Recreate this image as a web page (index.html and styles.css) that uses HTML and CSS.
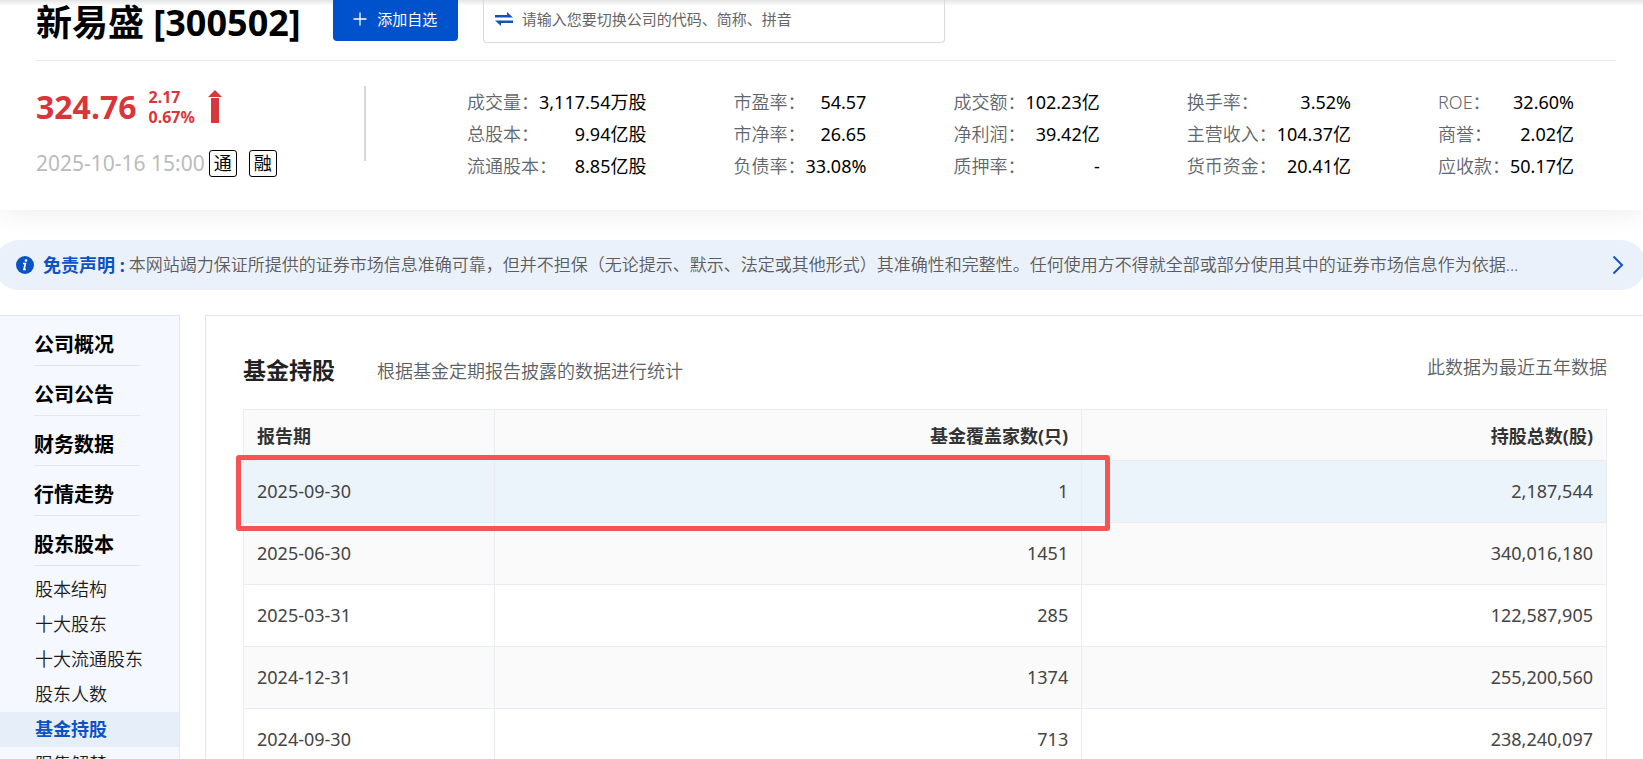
FILE: index.html
```html
<!DOCTYPE html>
<html lang="zh-CN">
<head>
    <meta charset="UTF-8">
    <meta name="viewport" content="width=device-width, initial-scale=1.0">
    <title>新易盛 [300502] 基金持股</title>
    <link rel="stylesheet" href="styles.css">
</head>
<body>

    <!-- Stock header -->
    <header class="stock-header">
        <div class="title-bar">
            <h1 class="stock-name">新易盛 [300502]</h1>
            <button class="add-btn" type="button">
                <svg width="14" height="14" viewBox="0 0 14 14" aria-hidden="true">
                    <path d="M7 0.5v13M0.5 7h13" stroke="#fff" stroke-width="1.3" fill="none"/>
                </svg>
                添加自选
            </button>
            <label class="search-box">
                <svg width="18" height="16" viewBox="0 0 18 16" aria-hidden="true">
                    <path d="M0 4H12V1L18 6.5H0zM18 9.5H0L6 15V12H18z" fill="#0f55b8"/>
                </svg>
                <input class="search-input" type="text" aria-label="切换公司" placeholder="请输入您要切换公司的代码、简称、拼音">
            </label>
        </div>

        <div class="quote">
            <div class="quote-price">
                <div class="price-row">
                    <span class="price">324.76</span>
                    <span class="change"><span>2.17</span><span>0.67%</span></span>
                    <svg class="arrow" width="14" height="34" viewBox="0 0 14 34" aria-hidden="true">
                        <path d="M7 0L14 7H0zM3 8H11V33H3z" fill="#d7363a"/>
                    </svg>
                </div>
                <div class="time-row">
                    <span class="time">2025-10-16 15:00</span>
                    <span class="tag">通</span>
                    <span class="tag">融</span>
                </div>
            </div>

            <div class="stats">
                <dl class="stat-group">
                    <div class="stat"><dt>成交量：</dt><dd>3,117.54万股</dd></div>
                    <div class="stat"><dt>总股本：</dt><dd>9.94亿股</dd></div>
                    <div class="stat"><dt>流通股本：</dt><dd>8.85亿股</dd></div>
                </dl>
                <dl class="stat-group">
                    <div class="stat"><dt>市盈率：</dt><dd>54.57</dd></div>
                    <div class="stat"><dt>市净率：</dt><dd>26.65</dd></div>
                    <div class="stat"><dt>负债率：</dt><dd>33.08%</dd></div>
                </dl>
                <dl class="stat-group">
                    <div class="stat"><dt>成交额：</dt><dd>102.23亿</dd></div>
                    <div class="stat"><dt>净利润：</dt><dd>39.42亿</dd></div>
                    <div class="stat"><dt>质押率：</dt><dd>-</dd></div>
                </dl>
                <dl class="stat-group">
                    <div class="stat"><dt>换手率：</dt><dd>3.52%</dd></div>
                    <div class="stat"><dt>主营收入：</dt><dd>104.37亿</dd></div>
                    <div class="stat"><dt>货币资金：</dt><dd>20.41亿</dd></div>
                </dl>
                <dl class="stat-group">
                    <div class="stat"><dt>ROE：</dt><dd>32.60%</dd></div>
                    <div class="stat"><dt>商誉：</dt><dd>2.02亿</dd></div>
                    <div class="stat"><dt>应收款：</dt><dd>50.17亿</dd></div>
                </dl>
            </div>
        </div>
    </header>

    <!-- Disclaimer -->
    <a class="notice" href="#">
        <svg width="20" height="20" viewBox="0 0 20 20" aria-hidden="true">
            <circle cx="10" cy="10" r="9" fill="#0b53c5"/>
            <circle cx="11" cy="5.5" r="1.3" fill="#fff"/>
            <path d="M8 8.5h2.4L9 14.3h1.8" stroke="#fff" stroke-width="1.7" fill="none"/>
        </svg>
        <strong class="notice-title">免责声明 :</strong>
        <span class="notice-text">本网站竭力保证所提供的证券市场信息准确可靠，但并不担保（无论提示、默示、法定或其他形式）其准确性和完整性。任何使用方不得就全部或部分使用其中的证券市场信息作为依据...</span>
        <svg class="notice-more" width="12" height="20" viewBox="0 0 12 20" aria-hidden="true">
            <path d="M1.5 1.5L10 10L1.5 18.5" stroke="#1457bd" stroke-width="2" fill="none"/>
        </svg>
    </a>

    <div class="layout">
        <!-- Side menu -->
        <nav class="side-menu">
            <a class="menu-title" href="#">公司概况</a>
            <a class="menu-title" href="#">公司公告</a>
            <a class="menu-title" href="#">财务数据</a>
            <a class="menu-title" href="#">行情走势</a>
            <a class="menu-title" href="#">股东股本</a>
            <div class="sub-menu">
                <a href="#">股本结构</a>
                <a href="#">十大股东</a>
                <a href="#">十大流通股东</a>
                <a href="#">股东人数</a>
                <a class="active" href="#">基金持股</a>
                <a href="#">限售解禁</a>
            </div>
        </nav>

        <!-- Fund holdings -->
        <main class="content">
            <div class="content-head">
                <h2>基金持股</h2>
                <p class="desc">根据基金定期报告披露的数据进行统计</p>
                <p class="range">此数据为最近五年数据</p>
            </div>
            <div class="table-wrap">
                <table class="data-table">
                    <thead>
                        <tr><th class="col-date">报告期</th><th class="col-count">基金覆盖家数(只)</th><th>持股总数(股)</th></tr>
                    </thead>
                    <tbody>
                        <tr class="current"><td>2025-09-30</td><td>1</td><td>2,187,544</td></tr>
                        <tr><td>2025-06-30</td><td>1451</td><td>340,016,180</td></tr>
                        <tr><td>2025-03-31</td><td>285</td><td>122,587,905</td></tr>
                        <tr><td>2024-12-31</td><td>1374</td><td>255,200,560</td></tr>
                        <tr><td>2024-09-30</td><td>713</td><td>238,240,097</td></tr>
                    </tbody>
                </table>
                <div class="mark"></div>
            </div>
        </main>
    </div>

</body>
</html>
```

FILE: styles.css
```css
* {
    box-sizing: border-box;
}

html {
    height: 100%;
    overflow: hidden;
}

body {
    margin: 0;
    font-family: "Noto Sans", "Noto Sans CJK SC", sans-serif;
    font-size: 18px;
    line-height: 32px;
    color: #000;
    background-color: #fff;
}

h1, h2, p, dl, dd {
    margin: 0;
}

a {
    color: inherit;
    text-decoration: none;
}

/* Stock header */
.stock-header {
    height: 210px;
    padding: 0 27px 0 36px;
    background: linear-gradient(#e4e4e4, #fff 6px);
    box-shadow: 0 4px 24px rgba(0, 0, 0, 0.07);
}

.title-bar {
    display: flex;
    align-items: flex-start;
    height: 61px;
    border-bottom: 1px solid #e9e9e9;
}

.stock-name {
    font-size: 36px;
    line-height: 45px;
    font-weight: bold;
    white-space: nowrap;
}

.add-btn {
    display: flex;
    align-items: center;
    justify-content: center;
    gap: 10px;
    width: 125px;
    height: 41px;
    margin-left: 32px;
    padding: 0 0 4px;
    border: 0;
    border-radius: 0 0 4px 4px;
    background-color: #0052cc;
    color: #fff;
    font-family: inherit;
    font-size: 15px;
}

.search-box {
    display: flex;
    align-items: center;
    gap: 9px;
    width: 462px;
    height: 43px;
    margin-left: 25px;
    padding: 0 11px 4px;
    border: 1px solid #d9dade;
    border-top: 0;
    border-radius: 0 0 4px 4px;
}

.search-input {
    flex: 1;
    padding: 0;
    border: 0;
    outline: 0;
    background: none;
    font-family: inherit;
    font-size: 15px;
}

.search-input::placeholder {
    color: #666;
    opacity: 1;
}

/* Price and key figures */
.quote {
    display: flex;
    padding-top: 25px;
}

.quote-price {
    width: 330px;
    height: 75px;
    border-right: 2px solid #d8d8d8;
}

.price-row {
    display: flex;
    align-items: center;
    height: 41px;
    color: #d7363a;
    font-weight: bold;
}

.price {
    font-size: 32px;
}

.change {
    display: flex;
    flex-direction: column;
    margin-left: 12px;
    font-size: 16px;
    line-height: 20px;
}

.arrow {
    margin-left: 13px;
}

.time-row {
    display: flex;
    align-items: center;
    margin-top: 20px;
}

.time {
    color: #bbb;
    font-size: 21px;
}

.tag {
    width: 28px;
    margin: 0 8px 0 4px;
    border: 1px solid #000;
    border-radius: 3px;
    line-height: 25px;
    text-align: center;
}

.stats {
    display: flex;
    gap: 87px;
    margin-left: 101px;
    white-space: nowrap;
}

.stat {
    display: flex;
    justify-content: space-between;
}

.stat dt {
    color: #5f666d;
    font-weight: 350;
}

/* Disclaimer */
.notice {
    display: flex;
    align-items: center;
    height: 50px;
    margin: 30px -3px 25px -6px;
    padding: 0 22px 0 21px;
    border-radius: 25px;
    background-color: #ebf1fb;
    white-space: nowrap;
}

.notice-title {
    margin: 0 4px 0 8px;
    color: #0b53c5;
}

.notice-text {
    color: #5c5c5c;
    font-size: 17px;
    font-weight: 350;
}

.notice-more {
    margin-left: auto;
}

/* Page body */
.layout {
    display: flex;
    gap: 25px;
}

.side-menu {
    flex: 0 0 180px;
    border: 1px solid #e3e6ea;
    border-left: 0;
    background-color: #f5f8ff;
}

.menu-title {
    display: block;
    height: 50px;
    margin: 0 39px 0 34px;
    padding-top: 13px;
    border-bottom: 1px solid #e3e6ea;
    font-size: 20px;
    font-weight: bold;
}

.sub-menu {
    padding-top: 6px;
}

.sub-menu a {
    display: block;
    padding-left: 35px;
    color: #1c1c1c;
    font-weight: 350;
    line-height: 35px;
}

.sub-menu .active {
    background-color: #e6eefa;
    color: #0b53c5;
    font-weight: bold;
}

.content {
    flex: 1;
    padding: 36px 36px 0 37px;
    border: 1px solid #e5e5e5;
    border-width: 1px 0 0 1px;
}

.content-head {
    display: flex;
    height: 57px;
    color: #5c5f63;
    font-weight: 350;
}

.content-head h2 {
    color: #222;
    font-size: 23px;
    line-height: 36px;
}

.desc {
    margin-left: 42px;
    line-height: 38px;
}

.range {
    margin-left: auto;
    line-height: 30px;
}

.table-wrap {
    position: relative;
}

.data-table {
    width: 100%;
    border-collapse: collapse;
    color: #444;
}

.data-table th,
.data-table td {
    height: 62px;
    padding: 0 13px 2px;
    border: 1px solid #e9ecf1;
    text-align: right;
}

.data-table th {
    height: 51px;
    padding-top: 4px;
    background-color: #fafafa;
    color: #333;
}

.data-table th:first-child,
.data-table td:first-child {
    text-align: left;
}

.data-table .col-date {
    width: 18.4%;
}

.data-table .col-count {
    width: 43.1%;
}

.data-table tr:nth-child(even) {
    background-color: #fafafa;
}

.data-table .current {
    background-color: #ecf4fb;
}

/* Red frame round the latest period */
.mark {
    position: absolute;
    top: 46px;
    left: -7px;
    width: 64.1%;
    height: 76px;
    border: 5px solid #f65454;
    border-radius: 3px;
}
```
